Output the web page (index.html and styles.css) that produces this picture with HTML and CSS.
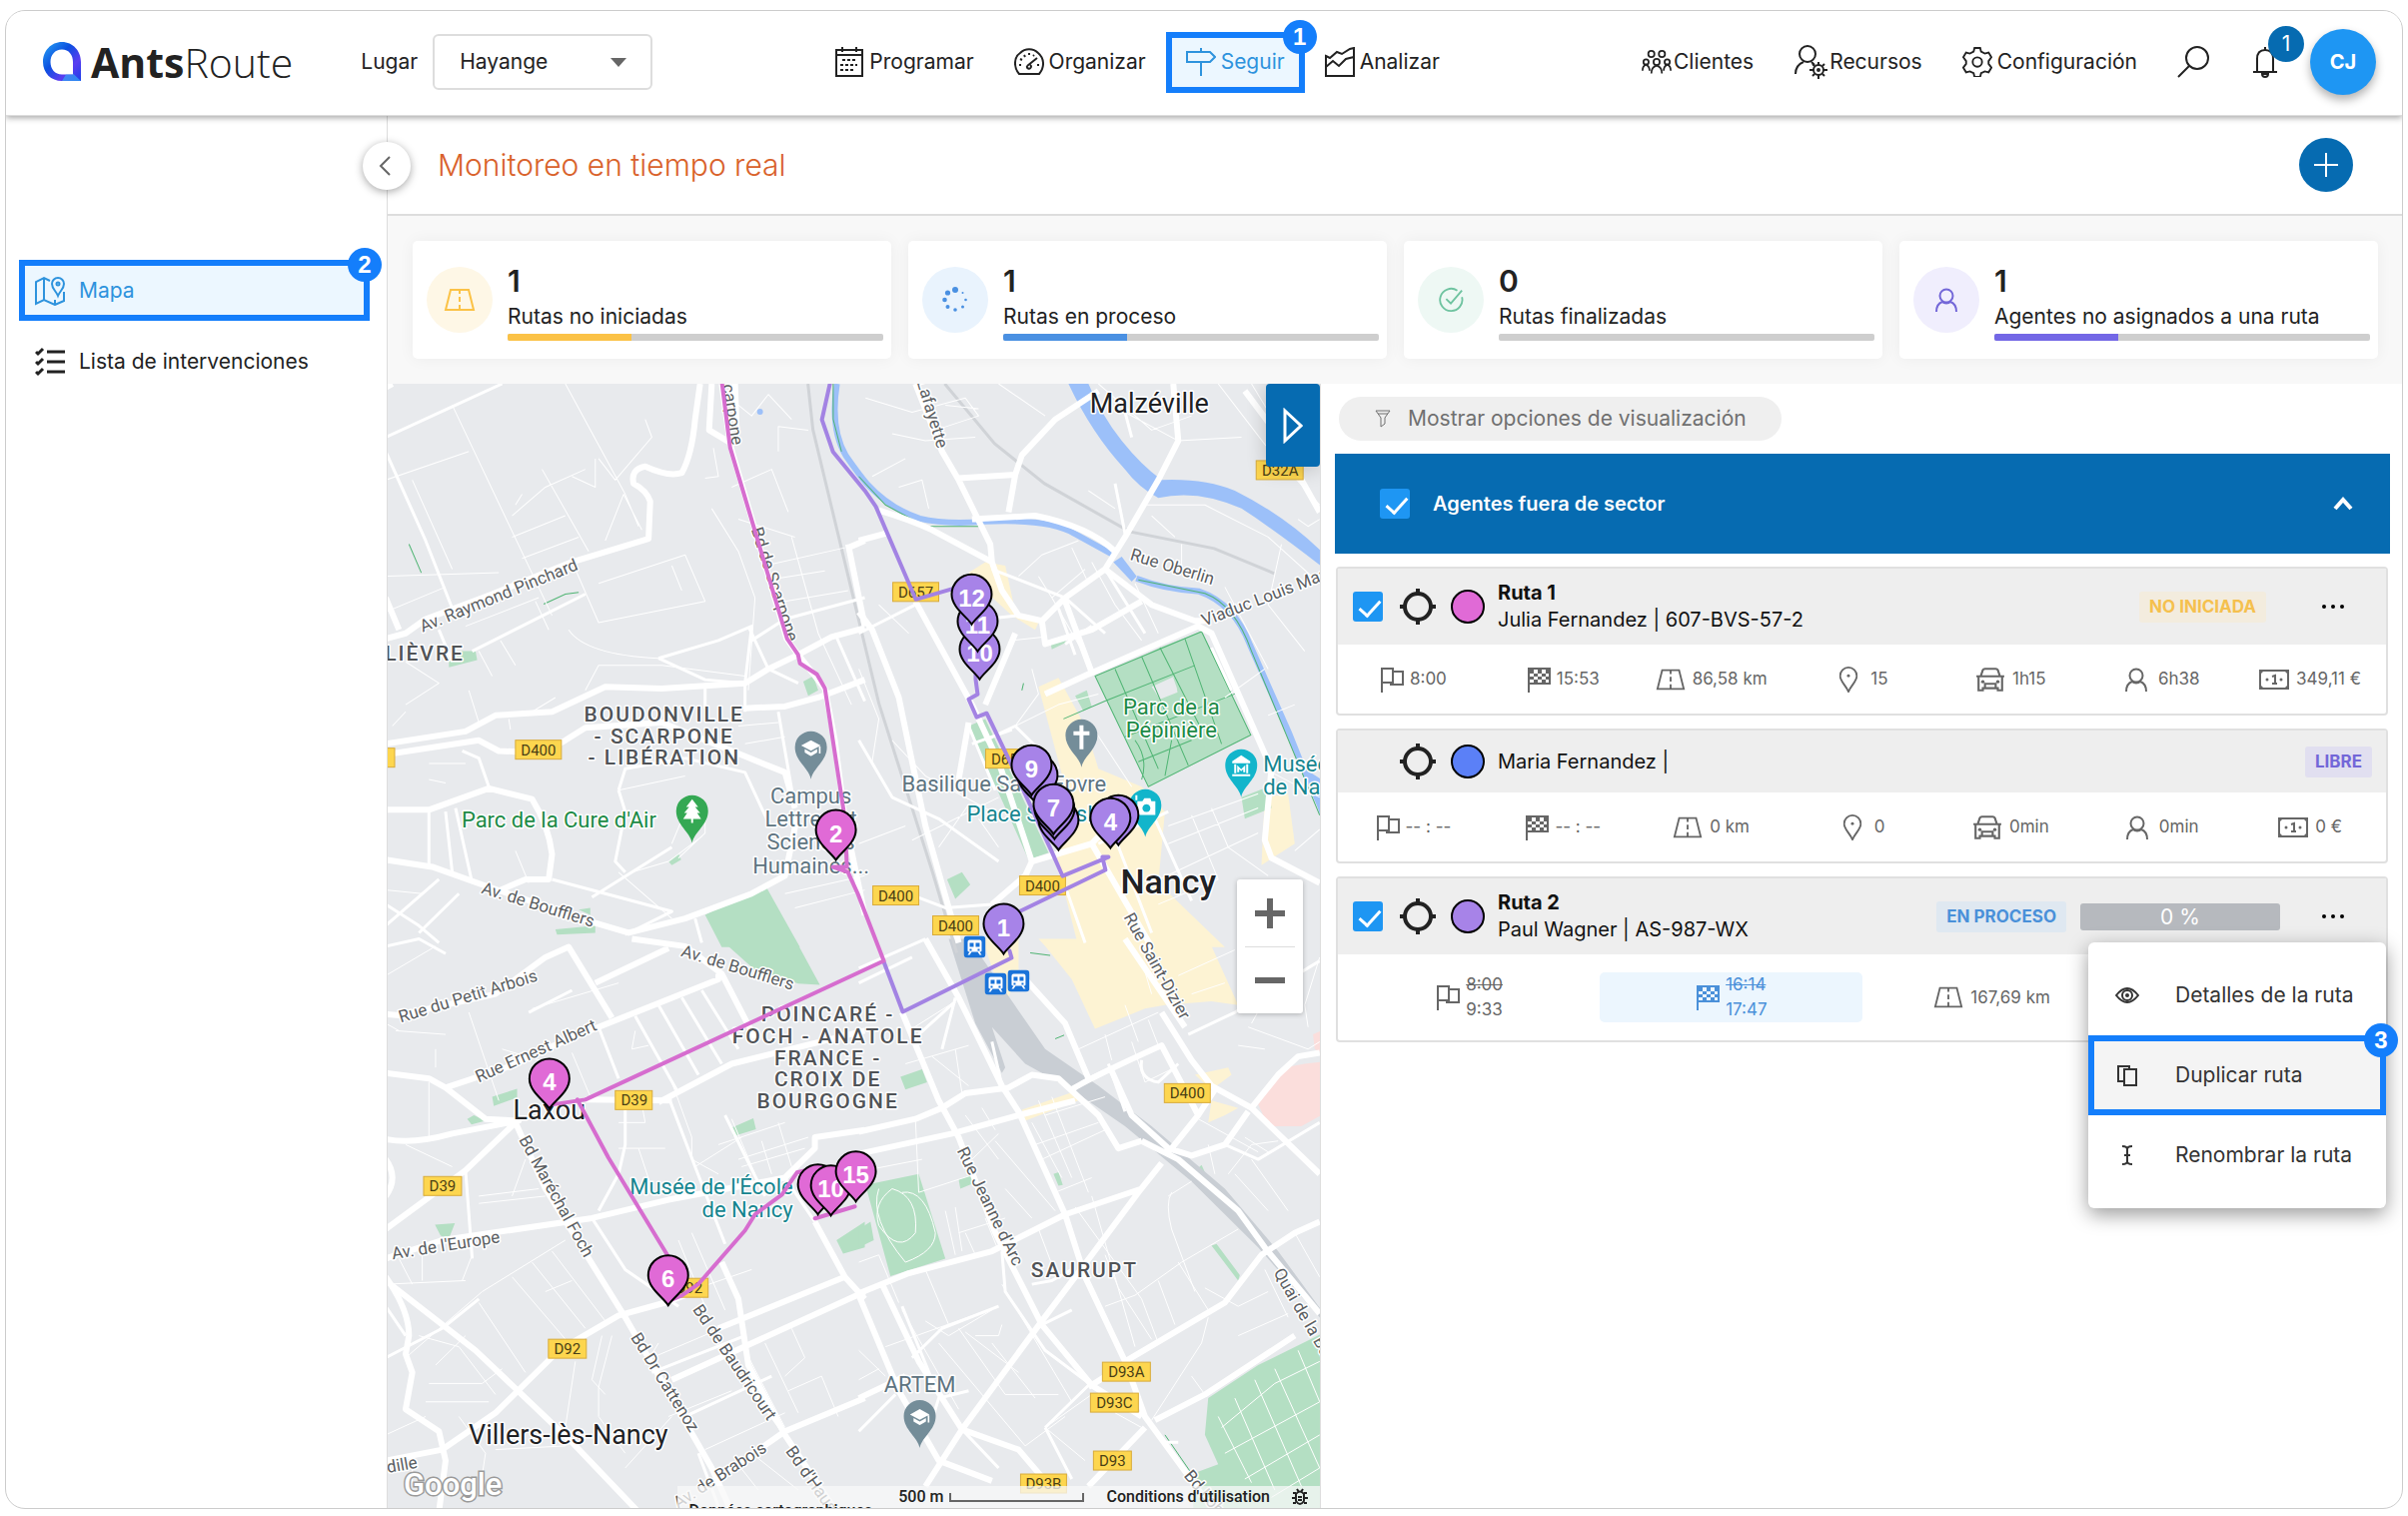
FILE: index.html
```html
<!DOCTYPE html>
<html lang="es">
<head>
    <meta charset="UTF-8">
    <meta name="viewport" content="width=device-width, initial-scale=1.0">
    <title>AntsRoute - Monitoreo en tiempo real</title>
    <link rel="stylesheet" href="styles.css">
</head>
<body>
    <!-- Iconos compartidos -->
    <svg class="sprite" aria-hidden="true">
        <symbol id="i-road" viewBox="0 0 32 24"><path d="M7 2h18l5 20H2z M16 2v4 M16 9v5 M16 17v5"/></symbol>
        <symbol id="i-user" viewBox="0 0 24 26"><circle cx="12" cy="9" r="6.5"/><path d="M2 25c0-6 3-9 6-10 2 2 6 2 8 0 3 1 6 4 6 10"/></symbol>
        <symbol id="i-flag" viewBox="0 0 24 26"><path d="M2 26V2h11v14H2 M13 5h10v13H11v-2"/></symbol>
        <symbol id="i-finish" viewBox="0 0 24 26"><path d="M2 26V2h21v15H2"/><path class="solid" d="M3 3h4v4H3z M11 3h4v4h-4z M19 3h3v4h-3z M7 7h4v3H7z M15 7h4v3h-4z M3 10h4v3H3z M11 10h4v3h-4z M19 10h3v3h-3z M7 13h4v4H7z M15 13h4v4h-4z"/></symbol>
        <symbol id="i-pin" viewBox="0 0 20 28"><path d="M10 27C7 20 1 16 1 10a9 9 0 0 1 18 0c0 6-6 10-9 17z"/><circle class="solid" cx="10" cy="10" r="1.6"/></symbol>
        <symbol id="i-car" viewBox="0 0 28 24"><path d="M5 9l2-6q.5-1 2-1h10q1.5 0 2 1l2 6 M1 9h26 M3 9v13h4v-2h14v2h4V9 M9 19v-3h10v3"/><circle class="solid" cx="7" cy="14" r="1.6"/><circle class="solid" cx="21" cy="14" r="1.6"/></symbol>
        <symbol id="i-money" viewBox="0 0 30 20"><path d="M1 1h28v18H1z M13 7l3-1v8 M13 14h5"/><path class="solid" d="M1 1h4L1 5z M29 1v4l-4-4z M1 19v-4l4 4z M29 19h-4l4-4z"/><circle class="solid" cx="8" cy="10" r="1.5"/><circle class="solid" cx="22" cy="10" r="1.5"/></symbol>
        <symbol id="i-target" viewBox="0 0 36 36"><circle cx="18" cy="18" r="13"/><path d="M18 0v6 M18 30v6 M0 18h6 M30 18h6"/></symbol>
        <symbol id="pin" viewBox="-22 -54 44 56" overflow="visible"><path d="M0 0C-5-8-20-17-20-30a20 20 0 0 1 40 0C20-17 5-8 0 0z"/></symbol>
        <symbol id="poi" viewBox="-18 -50 36 52" overflow="visible"><path d="M0 0C-2-11-16-18-16-32a16 16 0 0 1 32 0C16-18 2-11 0 0z"/></symbol>
        <symbol id="cap" viewBox="0 0 22 18"><path d="M11 0l11 6-11 6L0 6z M4 10l7 4 7-4v4l-7 4-7-4z M20 7h2v8h-2z"/></symbol>
        <symbol id="bus" viewBox="0 0 22 22"><rect width="22" height="22" rx="4" fill="#1a73d9"/><path fill="#fff" d="M6 4h10q2 0 2 2v9q0 1-2 1l2 3h-2l-2-3H8l-2 3H4l2-3q-2 0-2-1V6q0-2 2-2z"/><path fill="#1a73d9" d="M6 7h4v4H6z M12 7h4v4h-4z M6 13h2v2H6z M14 13h2v2h-2z"/></symbol>
    </svg>

    <div class="app">
        <header class="header">
            <a href="#" class="logo">
                <svg class="logo-mark" viewBox="0 0 40 40">
                    <defs><linearGradient id="lg" x1="0" y1="0" x2="1" y2="1"><stop offset="0" stop-color="#2ba8f5"/><stop offset=".4" stop-color="#0b50e0"/><stop offset=".7" stop-color="#5a3df0"/><stop offset="1" stop-color="#1a3fe8"/></linearGradient></defs>
                    <path fill="url(#lg)" fill-rule="evenodd" d="M20 0C31 0 39 9 39 20v19H20C9 39 1 31 1 20S9 0 20 0z M20 7.5C13 7.5 8.5 13 8.5 20S13 32.5 20 32.5h11V20c0-7-4-12.5-11-12.5z"/>
                    <path fill="#35b6f7" d="M20 39l4-6.5h7v-1l8 7.5z" opacity=".6"/>
                </svg>
                <span class="logo-text"><b>Ants</b>Route</span>
            </a>
            <div class="place">
                <label for="lugar">Lugar</label>
                <div class="select">
                    <select id="lugar"><option>Hayange</option></select>
                </div>
            </div>
            <nav class="nav">
                <a href="#" class="nav-item">
                    <svg class="icon" viewBox="0 0 30 30"><path d="M2 3h26v26H2z M2 8h26 M8 0v5 M22 0v5"/><path d="M8 13h15 M6 18h17 M6 23h13" stroke-dasharray="3 2"/></svg>Programar</a>
                <a href="#" class="nav-item">
                    <svg class="icon" viewBox="0 0 30 30"><path d="M5 27C-1 20 0 10 6 6c5-5 13-5 18 0 6 5 7 14 1 21z M13 19L23 11 M13 19a2 2 0 1 0 3-1"/><path d="M5 18h2 M6 12l2 1 M10 8l1 2 M15 6v2 M20 8l-1 1 M23 18h2"/></svg>Organizar</a>
                <a href="#" class="nav-item highlight">
                    <svg class="icon" viewBox="0 0 30 30"><path d="M1 5h23l5 5-5 5H1z M15 1v4 M15 15v14"/></svg>Seguir<span class="step">1</span></a>
                <a href="#" class="nav-item">
                    <svg class="icon" viewBox="0 0 30 30"><path d="M1 9l4 2 7-6 5 2 8-5 4-1v28H1z M1 20l7-6 6 5 7-7 8-2"/></svg>Analizar</a>
            </nav>
            <nav class="nav">
                <a href="#" class="nav-item nav-tight">
                    <svg class="icon" viewBox="0 0 34 30"><circle cx="11" cy="6" r="3.5"/><circle cx="23" cy="6" r="3.5"/><circle cx="5" cy="15" r="3"/><circle cx="29" cy="15" r="3"/><circle cx="17" cy="15" r="3.5"/><path d="M1 25c0-4 1-6 4-7 2 1 4 3 4 7 M25 25c0-4 2-6 4-7 3 1 4 3 4 7 M11 28c0-5 2-8 6-9 4 1 6 4 6 9"/></svg>Clientes</a>
                <a href="#" class="nav-item nav-tight">
                    <svg class="icon icon-lg" viewBox="0 0 34 34"><circle cx="14" cy="9" r="8"/><path d="M2 29c0-6 3-10 8-12 M18 17l3 3"/><circle cx="25" cy="25" r="5"/><circle cx="25" cy="25" r="1"/><path d="M25 17v3 M25 30v4 M16 25h4 M30 25h4 M19 19l2 2 M29 29l2 2 M31 19l-2 2 M21 29l-2 2"/></svg>Recursos</a>
                <a href="#" class="nav-item">
                    <svg class="icon" viewBox="0 0 30 32"><path d="M12 1h6l1 4 4 2 4-1 3 5-3 4v3l3 4-3 5-4-1-4 2-1 4h-6l-1-4-4-2-4 1-3-5 3-4v-3l-3-4 3-5 4 1 4-2z"/><circle cx="15" cy="16" r="5"/></svg>Configuración</a>
                <button type="button" class="icon-button" aria-label="Buscar">
                    <svg class="icon" viewBox="0 0 32 32"><circle cx="20" cy="12" r="11"/><path d="M12 20L1 31"/></svg>
                </button>
                <button type="button" class="icon-button bell" aria-label="Notificaciones">
                    <svg class="icon" viewBox="0 0 26 32"><path d="M5 26V13c0-6 3-9 8-9s8 3 8 9v13 M1 26h24 M13 1v3 M10 28a3 3 0 0 0 6 0z"/></svg>
                    <span class="count">1</span>
                </button>
                <button type="button" class="avatar">CJ</button>
            </nav>
        </header>

        <div class="body">
            <aside class="sidebar">
                <button type="button" class="collapse" aria-label="Contraer menú">
                    <svg class="icon" viewBox="0 0 24 24"><path d="M15 3l-9 9 9 9"/></svg>
                </button>
                <a href="#" class="side-item highlight">
                    <svg class="icon" viewBox="0 0 30 30"><path d="M15 5l-6-3-8 4v22l8-4 11 5 9-4V16 M9 2v22 M20 24v5"/><path d="M23 20c-2-5-6-7-6-12a6 6 0 0 1 12 0c0 5-4 7-6 12z"/><circle cx="23" cy="8" r="1.5"/></svg>
                    Mapa<span class="step">2</span></a>
                <a href="#" class="side-item">
                    <svg class="icon icon-bold" viewBox="0 0 30 30"><path d="M12 5h18 M12 15h18 M12 25h18 M1 5l2 2 5-5 M1 15l2 2 5-5 M1 25l2 2 5-5"/></svg>
                    Lista de intervenciones</a>
            </aside>

            <main class="main">
                <div class="titlebar">
                    <h1>Monitoreo en tiempo real</h1>
                    <button type="button" class="add" aria-label="Agregar">
                        <svg class="icon" viewBox="0 0 24 24"><path d="M12 0v24 M0 12h24"/></svg>
                    </button>
                </div>

                <!-- Resumen de rutas -->
                <section class="stats">
                    <div class="stat stat-yellow">
                        <div class="stat-icon"><svg class="icon" viewBox="0 0 32 24"><use href="#i-road"/></svg></div>
                        <div class="stat-data"><strong>1</strong><span>Rutas no iniciadas</span><div class="bar"><div class="bar-fill" style="width: 33%"></div></div></div>
                    </div>
                    <div class="stat stat-blue">
                        <div class="stat-icon"><svg class="icon icon-dots" viewBox="0 0 26 26"><circle cx="13" cy="3" r="3"/><circle cx="5.5" cy="6" r="2.6"/><circle cx="2.5" cy="13" r="2.3"/><circle cx="5.5" cy="20" r="2"/><circle cx="13" cy="23" r="1.8"/><circle cx="20.5" cy="20" r="1.5"/><circle cx="23.5" cy="13" r="1.3"/><circle cx="20.5" cy="6" r="1"/></svg></div>
                        <div class="stat-data"><strong>1</strong><span>Rutas en proceso</span><div class="bar"><div class="bar-fill" style="width: 33%"></div></div></div>
                    </div>
                    <div class="stat stat-green">
                        <div class="stat-icon"><svg class="icon" viewBox="0 0 28 28"><path d="M21 4a12 12 0 1 0 5 7 M9 13l5 5L26 4"/></svg></div>
                        <div class="stat-data"><strong>0</strong><span>Rutas finalizadas</span><div class="bar"><div class="bar-fill" style="width: 0%"></div></div></div>
                    </div>
                    <div class="stat stat-violet">
                        <div class="stat-icon"><svg class="icon" viewBox="0 0 24 26"><use href="#i-user"/></svg></div>
                        <div class="stat-data"><strong>1</strong><span>Agentes no asignados a una ruta</span><div class="bar"><div class="bar-fill" style="width: 33%"></div></div></div>
                    </div>
                </section>

                <div class="content">
                    <!-- Mapa -->
                    <section class="map">
                        <svg class="map-canvas" viewBox="2 0 934 1126" preserveAspectRatio="xMinYMin slice">
                            <g class="water">
                                <path transform="translate(474) scale(.3333 .3571)" d="M630 0H690Q730 90 790 160Q850 230 910 270Q1040 265 1130 300Q1280 370 1390 470V512Q1250 410 1150 350Q1020 295 900 320Q840 290 800 240Q700 140 630 0z M765 500L790 485L835 540L820 555z M1340 1080L1390 1110V1220z"/>
                                <path class="canal" d="M452 0Q445 45 461 72Q475 92 482 100Q505 125 535 135Q560 141 600 138Q665 135 690 150L730 172"/>
                                <path class="canal" d="M752 195Q780 206 815 208Q850 220 866 262L905 350L923 395L940 430"/>
                                <circle cx="375" cy="28" r="3"/>
                            </g>
                            <!-- Parques, zonas comerciales y hospital -->
                            <g class="shops">
                                <path transform="translate(474) scale(.3333 .3571)" d="M540 850L600 825L680 960L720 1080L850 1130L920 1200L900 1400L1100 1580H660L590 1320L640 1200z M330 530L380 500L440 510L470 640L540 670L530 690L460 650L390 590z M1220 1160L1290 1150L1310 1290L1210 1350z"/>
                                <path transform="translate(474 556) scale(.3333 .368)" d="M560 20L540 0H1050L1140 180L1060 170L920 180L860 190L710 245L640 110z M370 0H480V90L440 180z M490 465L650 415L660 440L500 495z M1060 440L1140 460L1100 480L1050 500z M1010 370L1110 350L1120 370L1060 410z"/>
                            </g>
                            <path class="hospital" transform="translate(474 556) scale(.3333 .368)" d="M1200 450L1280 350L1340 340L1390 335V480L1330 510H1230z M1365 260L1390 250V310L1370 300z"/>
                            <g class="park">
                                <path transform="scale(.3333 .3571)" d="M960 1490L1140 1405L1245 1580H1010z M190 770L215 750H270L275 775L190 795z M1255 835L1285 820L1300 860L1270 875z M850 1340L880 1318L888 1335L860 1350z M510 1530L630 1520V1540L515 1545z M580 1475L615 1470V1490z"/>
                                <path transform="translate(474) scale(.3333 .3571)" d="M710 820L850 765L905 740L950 820L880 850L905 885L960 865L945 825L1030 695L1178 985L870 1132z M905 740L1030 695L1120 860L960 880L950 820z M330 960L380 940L570 1315L510 1335z M650 875L685 860L700 905L675 918z M1150 1160L1230 1130L1240 1190L1160 1220z M575 720L620 712L622 726L580 745z M265 1390L310 1370L335 1405L290 1445z"/>
                                <path transform="translate(0 556) scale(.3333 .368)" d="M1005 0H1230L1305 125L1240 122L1110 85z M320 430L395 408V432L325 455z M245 490L265 480L300 495L258 505z M1038 515L1105 488L1113 518L1045 537z M148 778L208 774L190 815L165 808z M1355 820L1440 770V840L1375 857z"/>
                                <path transform="translate(474 556) scale(.3333 .368)" d="M20 670L180 640L260 870L95 918z M0 790L35 770L45 820L0 840z M1050 1250L1200 1160L1390 1075V1550H1005V1455L1080 1430L1040 1350z M125 375L190 355L205 390L140 410z M300 655L345 640V665L305 680z M585 640L600 635L613 670L600 672z M1000 640L1030 615L1045 645L1025 655z M1060 835L1075 830L1145 915L1140 930z"/>
                            </g>
                            <g class="park-path">
                                <path transform="translate(474) scale(.3333 .3571)" d="M710 820L870 1130L1178 985L1030 695z M770 800L900 1080 M850 765L990 1070 M905 740L1030 970 M980 715L1090 1010 M740 890L1010 790 M800 990L1130 870 M840 1060L1000 1000 M830 1000Q870 1050 850 1110 M940 1000L920 1100 M615 940L740 890 M1385 1210L1180 750Q1130 620 1040 588L840 550 M490 860L495 840 M0 260L80 340L200 400L360 400"/>
                                <path transform="scale(.3333 .3571)" d="M70 450L107 530 M475 618L540 590L580 585 M1345 0L1345 100L1370 190"/>
                                <path transform="translate(474 556) scale(.3333 .368)" d="M515 38L575 45 M590 272L617 262 M920 1350L1000 1455"/>
                            </g>
                            <g class="rail">
                                <path class="yard" transform="translate(474 556) scale(.3333 .368)" d="M270 0H330L430 130L560 300L720 400L880 510L1100 680L1260 850L1390 1010V1035L1200 840L1000 660L800 510L640 410L500 340L400 240L440 350L430 365L350 230z"/>
                                <path d="M423 0L428 46L453 150L494 320L548 490L572 570"/>
                                <path d="M560 0L610 60L660 100L745 148L830 165L890 190"/>
                            </g>
                            <g class="street thin">
                                <path transform="scale(.3333 .3571)" d="M200 60L500 650 M540 0L720 310L760 400 M0 270L250 190 M80 270L200 520 M380 370L480 290L600 240 M380 430L540 370 M410 490L580 430 M470 240L610 470 M660 440L715 310L770 410 M640 210L690 270L800 150L780 100 M240 680L460 600 M280 750L320 820 M345 720L390 790 M0 540L340 530 M570 520L640 670L960 610L900 480 M640 560L900 480 M860 510L890 580 M550 690Q600 760 820 770 M600 860L640 790L830 790L1080 820 M250 860L280 950 M370 940L375 970 M440 920L510 880 M130 1065H240 M130 1110L180 1120 M700 1140L900 1100 M560 260L630 290V210 M980 350L1060 470L1110 600L1090 860 M985 180L1000 260L960 265 M1040 290L1160 240L1210 360 M1060 380L1230 430 M1140 510L1380 460 M1150 550L1320 525 M1200 610L1390 580 M1220 430L1300 700L1400 900 M1060 60L1100 90L1150 30L1220 100 M1180 190V120L1270 130 M0 640L180 570 M1200 1430L1440 1380 M1230 1470L1440 1420 M1060 960L1180 950 M1080 1010L1200 990 M700 1370L860 1500 M740 1370L850 1340L950 1270 M0 1420L110 1430 M60 900L160 840L60 780 M450 610L490 690 M410 310L390 340 M20 960L60 920 M390 1310L430 1400 M860 1290L900 1200L960 1210V1260L880 1330"/>
                                <path transform="translate(474) scale(.3333 .3571)" d="M20 40L160 80L320 40L360 90L230 130 M100 140L200 160L350 150 M260 60L360 70 M40 260L140 210 M120 290L190 270L210 350 M420 0L560 90 M720 0L880 130L1000 90 M1080 0L1220 170L1385 340 M800 80L960 160L1150 150 M690 300L770 350 M880 370L950 430 M860 340H1040L1230 430L1385 560 M970 450V520 M640 460L690 560 M540 540L580 600L680 520 M480 540L550 480L660 440 M700 500L770 620L850 720 M830 560L900 700 M60 620L150 700 M0 800L60 940L40 1060 M100 1000L200 1100L400 1200 M160 1280L420 1160 M420 1300L360 1220 M240 1300L330 1180 M0 1290L140 1240 M580 600L690 780 M460 720L560 710 M470 960L600 900L720 870 M520 800L540 870L470 960 M1100 570L1230 800 M1100 880L1220 800 M930 1240L1200 1150 M930 1290L1200 1190 M1000 1210L1080 1390 M1060 1190L1110 1300L1230 1380 M880 1400L1200 1260 M900 1460L1080 1390 M1240 1090L1385 1160 M1310 1310L1385 1250 M1230 930L1310 900 M700 960L820 1130 M1270 450L1230 620L1340 750 M1180 0L1310 200 M1320 380L1350 400L1385 380"/>
                                <path transform="translate(0 556) scale(.3333 .368)" d="M0 100L150 20 M440 190L700 120 M350 300L460 330 M250 200L340 440 M130 390V540 M560 310L620 440 M420 600L380 700 M280 700L460 680 M280 720L480 700 M60 560L200 620 M700 500H780L770 450 M700 570L840 570 M930 620L1070 540 M860 390L920 540V600L1000 640 M1000 560L1200 500 M1060 600L1270 540 M1070 620L1260 570 M1040 490L1110 640 M1130 550L1160 640 M1180 500L1220 620 M880 820L960 1000 M920 800L1020 1010 M940 950L1100 900 M800 1140L1060 1040 M780 1160L820 1100 M850 1300L1040 1230 M960 1390L1200 1290 M1220 1060L1260 1140L1200 1190 M1210 1230L1310 1190L1360 1300 M1050 1420L1120 1500 M1100 1400L1240 1500 M380 920L550 1100 M440 880L600 1060 M500 850L660 1040 M280 990L420 1180 M100 1080L220 1110L330 1240 M60 1140L290 960L540 820 M130 1210H290L350 1170 M120 1260L310 1260 M150 1160L240 1080 M40 870L80 940 M110 860V930 M0 940L240 930 M260 860L230 930 M570 1150L540 1330 M650 1080L620 1200L660 1240 M680 1080L640 1220V1300L720 1400 M480 960L560 930 M220 1300L300 1400L290 1460 M330 1390L540 1380 M80 1400V1480 M720 1440L860 1300 M1080 1120L1200 1330 M1140 1100L1240 1290 M0 1350L120 1300 M800 680L760 570 M750 250L740 300L790 290 M150 300V350 M30 250L180 260 M0 230L40 250"/>
                                <path transform="translate(474 556) scale(.3333 .368)" d="M150 250L290 170 M140 340L330 290 M290 300L310 420 M220 320L330 400 M320 480L420 600 M370 460L410 520 M170 490L180 690L350 640 M20 630L190 600 M410 550L590 740 M520 500L610 650 M440 680L520 760 M420 530L340 600 M530 560L720 500 M550 600L740 520 M540 440L640 650 M580 430L690 690 M590 690L700 650 M560 480L740 430 M700 700L830 1110 M650 730L850 980L900 1100 M740 860L780 950L880 1090 M830 970L970 880L1140 790 M740 1000L830 970 M900 930L950 1050 M960 880L1050 1010 M1050 1030L1030 1100L880 1310 M1110 640L1180 560L1260 550 M1020 490L1200 580 M1130 640L1230 740 M1180 600L1290 740 M1160 540L1230 580 M660 300L900 200 M740 260L760 330 M820 280L860 390L950 350 M800 180L840 280 M870 220L900 290 M850 60L880 150 M960 100L1130 30 M1000 150L1100 120 M1170 240L1350 300L1385 280 M1140 290L1220 300 M1180 230L1260 100 M1350 240L1340 180L1385 50 M130 1010L300 1280 M0 1120L80 1190 M80 1110L420 1000 M200 1040L270 1080L400 1010 M350 1080H420L430 1050 M0 1200L60 1170 M240 1100L500 1380 M300 1060L440 1240L600 1240 M400 1100L530 1250 M430 940L640 1260 M320 1070L480 1180 M560 1330L700 1240 M560 1330L680 1420 M500 1380L620 1300 M1000 1190L1040 1240 M1040 950L1140 1000L1230 960 M1140 1080L1290 1020 M1220 900L1290 1030 M1310 800L1385 920 M0 880L60 860L120 990 M200 900L270 1050 M260 740L290 860 M290 730L310 850 M320 800L350 860 M300 800L440 760 M380 760L420 850 M540 790L590 910 M940 690Q920 720 940 790L1010 960 M930 700L1000 660 M770 1290L850 1330 M1070 640L1050 560"/>
                            </g>
                            <g class="street medium">
                                <path transform="scale(.3333 .3571)" d="M0 190L120 440L200 630 M0 150L210 60L350 0 M820 770L960 830L1080 840 M820 770L1000 720L1100 680L1080 840V920 M960 840V910 M600 590L260 750 M160 690L200 780 M1090 680L1150 800 M1100 720L1200 660L1440 600 M1350 700L1440 890 M1180 920L1230 1190 M1150 800L1240 840 M130 1200V1360 M180 1200L200 1370 M210 1190L260 1400 M310 1130L280 1050L230 1030 M700 1140L720 1200L690 1340L720 1370 M700 1140L720 1080L900 1050 M900 1050L1080 1090L1150 1230 M620 1440L860 1300 M500 1390L860 1480L720 1545 M930 1500L950 1568 M0 1520L160 1390 M100 1540L220 1430 M0 1460L100 1520L160 1568"/>
                                <path transform="translate(474) scale(.3333 .3571)" d="M400 520L620 600L740 700 M560 870L700 810 M620 730L700 680 M0 700L170 620 M770 280L800 420 M650 760L600 630 M740 520L860 700 M820 150L800 80 M380 660L480 650 M0 1000L100 1160L240 1220L420 1340 M380 1000L470 960L600 1080 M330 960L410 1140 M340 1010L460 970 M1120 860L1060 740 M720 1290L860 1230L930 1200 M590 1330L680 1568 M760 1250L880 1540 M880 1200L1000 1450 M120 1420L260 1470L400 1460"/>
                                <path transform="translate(0 556) scale(.3333 .368)" d="M0 20L100 0L180 40 M750 210L880 420 M820 180L940 370 M890 160L1010 340 M950 140L1060 300 M640 240L700 380 M430 200L560 140 M720 440V560L700 640L640 740 M240 630L260 870 M620 760L720 900L880 1000 M1020 480L1140 700 M850 430L930 620L1020 830 M900 1300L1160 1190 M800 1180L1080 1080 M940 1400L1000 1545 M1200 1350L1080 1200 M1290 770L1200 650 M0 1140L170 1060L280 980 M0 1000L60 1080"/>
                                <path transform="translate(474 556) scale(.3333 .368)" d="M0 80L200 0 M250 300L290 160 M0 120L160 50 M180 260L290 170 M400 280L430 400 M690 380L760 350 M750 340L800 470 M1100 560L1200 600L1385 500 M850 330Q840 380 900 390L960 340 M990 260L1130 200L1385 60 M430 850L440 960L560 1120L700 1215 M550 1050L640 1010 M130 1000L220 1200 M160 1140L250 1060L420 1000 M0 1340L110 1240 M520 940L580 930L640 900 M860 1300L920 1370L960 1370 M310 1335L420 1440 M690 1215L560 1330 M560 1330L640 1470 M210 1340L240 1250L330 1230"/>
                            </g>
                            <g class="street wide">
                                <path transform="scale(.3333 .3571)" d="M0 715L60 700L120 660L320 590L560 500L790 435L795 330Q785 300 745 280Q735 240 780 232Q850 262 890 250Q920 200 930 100L945 0 M980 0L972 130L1035 165 M1010 0L1035 170L1205 715L1240 760 M1050 0L1055 130 M0 10L20 0 M0 600L40 690 M0 1040L280 1000L340 1030L470 1035L540 1000L600 965L830 950L1080 1045L1200 1090L1230 1190 M0 1010L240 975L330 930L500 920L660 850L830 855L1080 840L1150 800L1240 760L1340 710L1440 685 M0 1195L130 1195L310 1135L440 1165Q490 1240 500 1320L490 1390L420 1390L320 1430 M0 1335L140 1355L290 1405L620 1510L730 1540L900 1500L1100 1430L1200 1380L1240 1200 M1080 910L1200 905L1300 880L1440 830 M1240 760L1320 855L1350 1000L1380 1220L1440 1490 M1390 450L1440 680 M1390 460L1440 440"/>
                                <path transform="translate(474) scale(.3333 .3571)" d="M170 0L250 190L300 270L395 450L400 500L430 580L480 650L550 665L620 600L740 520L800 430L900 270L960 160L945 0 M300 265L470 255L450 360 M470 255L490 200L590 100L720 20 M0 440L80 420 M60 355Q150 380 220 410L400 500 M340 380L530 370Q690 400 770 470 M740 520L880 620L1010 665H1050 M690 815L1020 680L1060 700L1240 1080L1220 1280L1240 1330L1385 1400 M550 665L560 730L700 690L850 610 M620 610L700 810L560 870 M0 640L40 690L120 880L200 1240L300 1568 M170 610L340 900L420 1060L520 1340 M470 700L380 900 M400 1460L500 1380L520 1340L700 1290L720 1270 M700 1290L880 1580 M1160 20L1240 120L1385 360 M300 1110L330 950"/>
                                <path transform="translate(0 556) scale(.3333 .368)" d="M0 365L130 380L180 405L380 345L480 300L640 240L1000 110L1000 95 M0 205L40 208L330 150L480 50L550 22L680 215 M630 120L850 25 M740 0L900 20L1010 95L1110 270 M0 545Q80 560 200 530L400 495L300 490L180 405 M0 790L240 630L390 500L480 680L720 1030L980 1440L1040 1560 M0 870L170 820L620 760L850 710L1200 650L1290 570V540L1440 520 M0 930L270 1120L560 1370L760 1560 M0 1420L170 1390L330 1290L520 1120L700 1025L840 990L900 970 M0 920Q70 1010 70 1080L60 1130L80 1180L60 1280L160 1340L180 1420L160 1560 M1010 880L1060 980L1090 1160L1200 1350L1340 1540 M860 1200L1440 960 M1000 1060L1380 920 M1290 770L1380 920L1440 980 M820 445L1040 340L1440 250 M950 1500L1200 1340L1440 1250 M600 437L860 440 M0 600Q40 650 0 700"/>
                                <path transform="translate(474 556) scale(.3333 .368)" d="M200 0L300 160L430 400L480 470L620 750L680 920L800 1150L860 1300L1070 1560 M480 90L620 230L690 380 M0 525L170 490L250 460L320 420L450 405L520 370L600 380L720 480L780 570L850 550 M0 585L280 530L480 480L650 440 M640 410Q690 380 910 290L1020 480 M910 200L1000 330L1060 400L1180 460L1385 640 M1180 460L1260 370L1320 320L1385 310 M760 360L820 480L930 570L1000 590L1100 560L1170 470 M940 570L1020 480L1070 410 M850 550L960 600L1140 740L1220 840L1385 1020 M910 610L840 690L700 860L550 1040L310 1335L200 1490 M0 965L150 910L400 850L620 750L850 680 M70 940L180 1150L310 1335L480 1390L560 1475 M0 970L120 1230L240 1420L400 1475 M130 200L240 440L300 540L410 800L550 1050L700 1215L850 1300 M0 1250L140 1190 M800 1150L1100 990L1210 860L1310 800L1385 770 M860 1330L690 1490 M890 1310L1040 1240L1310 1080 M690 1220L760 1180 M800 0L980 240"/>
                                <path transform="translate(474 556) scale(.3333 .368)" class="lane" d="M1090 1330L1250 1210L1385 1150 M1080 1300L1180 1480 M1130 1250L1250 1500 M1190 1200L1330 1490 M1250 1170L1385 1440 M1320 1120L1385 1260 M1100 1400L1385 1260 M1160 1470L1385 1350 M1240 1520L1385 1440 M100 680Q180 700 170 800Q120 860 60 780Q40 720 100 680 M60 680Q30 760 140 880Q230 850 230 800Q200 680 130 690"/>
                            </g>

                            <g class="label">
                                <text class="road-name" transform="translate(347 62) rotate(81)" text-anchor="end">Bd de Scarpone</text>
                                <text class="road-name" transform="translate(366 146) rotate(72)">Bd de Scarpone</text>
                                <text class="road-name" transform="translate(532 -2) rotate(73)">Lafayette</text>
                                <text class="road-name" transform="translate(37 249) rotate(-22)">Av. Raymond Pinchard</text>
                                <text class="road-name" transform="translate(745 176) rotate(17)">Rue Oberlin</text>
                                <text class="road-name" transform="translate(820 243) rotate(-21)">Viaduc Louis Marin</text>
                                <text class="road-name" transform="translate(95 510) rotate(17)">Av. de Boufflers</text>
                                <text class="road-name" transform="translate(295 573) rotate(17)">Av. de Boufflers</text>
                                <text class="road-name" transform="translate(15 640) rotate(-17)">Rue du Petit Arbois</text>
                                <text class="road-name" transform="translate(93 700) rotate(-24)">Rue Ernest Albert</text>
                                <text class="road-name" transform="translate(133 757) rotate(61)">Bd Maréchal Foch</text>
                                <text class="road-name" transform="translate(7 877) rotate(-9)">Av. de l'Europe</text>
                                <text class="road-name" transform="translate(245 955) rotate(58)">Bd Dr Cattenoz</text>
                                <text class="road-name" transform="translate(307 927) rotate(56)">Bd de Baudricourt</text>
                                <text class="road-name" transform="translate(293 1127) rotate(-33)">Av. de Brabois</text>
                                <text class="road-name" transform="translate(400 1069) rotate(55)">Bd d'Haussonville</text>
                                <text class="road-name" transform="translate(2 1091) rotate(-10)">dille</text>
                                <text class="road-name" transform="translate(572 768) rotate(64)">Rue Jeanne d'Arc</text>
                                <text class="road-name" transform="translate(739 534) rotate(61)">Rue Saint-Dizier</text>
                                <text class="road-name" transform="translate(889 890) rotate(60)">Quai de la Bataille</text>
                                <text class="road-name" transform="translate(799 1094) rotate(50)">Bd Lobau</text>
                                <text class="district" x="79" y="277" text-anchor="end">LIÈVRE</text>
                                <text class="district" text-anchor="middle"><tspan x="279" y="338">BOUDONVILLE</tspan><tspan x="279" y="360">- SCARPONE</tspan><tspan x="279" y="381">- LIBÉRATION</tspan></text>
                                <text class="district" text-anchor="middle"><tspan x="443" y="639">POINCARÉ -</tspan><tspan x="443" y="661">FOCH - ANATOLE</tspan><tspan x="443" y="683">FRANCE -</tspan><tspan x="443" y="704">CROIX DE</tspan><tspan x="443" y="726">BOURGOGNE</tspan></text>
                                <text class="district" x="700" y="895" text-anchor="middle">SAURUPT</text>
                                <text class="town" x="765" y="29" text-anchor="middle">Malzéville</text>
                                <text class="city" x="784" y="510" text-anchor="middle">Nancy</text>
                                <text class="town" x="164" y="737" text-anchor="middle">Laxou</text>
                                <text class="town" x="183" y="1062" text-anchor="middle">Villers-lès-Nancy</text>
                                <text class="place-green" x="76" y="444">Parc de la Cure d'Air</text>
                                <text class="place-green" text-anchor="middle"><tspan x="787" y="331">Parc de la</tspan><tspan x="787" y="354">Pépinière</tspan></text>
                                <text class="place-gray" text-anchor="middle"><tspan x="426" y="420">Campus</tspan><tspan x="426" y="443">Lettres et</tspan><tspan x="426" y="466">Sciences</tspan><tspan x="426" y="490">Humaines...</tspan></text>
                                <text class="place-gray" x="517" y="408">Basilique Saint-Epvre</text>
                                <text class="place-gray" x="535" y="1010" text-anchor="middle">ARTEM</text>
                                <text class="place-teal" x="582" y="438">Place Stanislas</text>
                                <text class="place-teal"><tspan x="879" y="388">Musée</tspan><tspan x="879" y="411">de Nancy</tspan></text>
                                <text class="place-teal" text-anchor="end"><tspan x="408" y="812">Musée de l'École</tspan><tspan x="408" y="835">de Nancy</tspan></text>
                            </g>

                            <g class="shield">
                                <rect x="130" y="357" width="46" height="19"/><text x="153" y="372">D400</text>
                                <rect x="-30" y="365" width="39" height="19"/>
                                <rect x="508" y="199" width="46" height="19"/><text x="531" y="214">D657</text>
                                <rect x="601" y="366" width="46" height="19"/><text x="624" y="381">D657</text>
                                <rect x="635" y="493" width="46" height="19"/><text x="658" y="508">D400</text>
                                <rect x="488" y="503" width="46" height="19"/><text x="511" y="518">D400</text>
                                <rect x="548" y="533" width="46" height="19"/><text x="571" y="548">D400</text>
                                <rect x="872" y="77" width="47" height="19"/><text x="896" y="92">D32A</text>
                                <rect x="230" y="708" width="37" height="19"/><text x="249" y="723">D39</text>
                                <rect x="38" y="794" width="38" height="19"/><text x="57" y="809">D39</text>
                                <rect x="286" y="896" width="37" height="19"/><text x="304" y="911">D92</text>
                                <rect x="163" y="957" width="38" height="19"/><text x="182" y="972">D92</text>
                                <rect x="780" y="701" width="46" height="19"/><text x="803" y="716">D400</text>
                                <rect x="718" y="980" width="48" height="19"/><text x="742" y="995">D93A</text>
                                <rect x="706" y="1011" width="48" height="19"/><text x="730" y="1026">D93C</text>
                                <rect x="709" y="1069" width="38" height="19"/><text x="728" y="1084">D93</text>
                                <rect x="636" y="1092" width="46" height="19"/><text x="659" y="1107">D93B</text>
                            </g>

                            <g class="poi">
                                <use href="#poi" x="408" y="346" width="36" height="52" fill="#748d99"/><use href="#cap" x="416" y="357" width="20" height="16" fill="#fff"/>
                                <use href="#poi" x="289" y="410" width="36" height="52" fill="#34a853"/><path fill="#fff" d="M307 416l6 8h-3l5 6h-3l4 6h-8v4h-2v-4h-8l4-6h-3l5-6h-3z"/>
                                <use href="#poi" x="679" y="334" width="36" height="52" fill="#748d99"/><path fill="#fff" d="M695 342h4v6h6v4h-6v14h-4v-14h-6v-4h6z"/>
                                <use href="#poi" x="839" y="364" width="36" height="52" fill="#12b5cb"/><path fill="#fff" d="M857 372l9 6v2h-18v-2z M850 381h2v9h-2z M862 381h2v9h-2z M848 391h18v2h-18z M853 389v-7l4 4 4-4v7h-2v-3l-2 2-2-2v3z"/>
                                <use href="#poi" x="743" y="404" width="36" height="52" fill="#12b5cb"/><path fill="#fff" fill-rule="evenodd" d="M753 418h5l2-3h6l1 3h4v14h-18z M762 421a4 4 0 1 0 .1 0z M751 412h2v5h-2z"/>
                                <use href="#poi" x="517" y="1016" width="36" height="52" fill="#748d99"/><use href="#cap" x="525" y="1027" width="20" height="16" fill="#fff"/>
                                <use href="#bus" x="579" y="553" width="22" height="22"/><use href="#bus" x="600" y="590" width="22" height="22"/><use href="#bus" x="623" y="587" width="22" height="22"/>
                            </g>

                            <!-- Trazado de las rutas -->
                            <path class="route violet" d="M445 0L437 36L448 68L480 107L491 123L531 216L569 205 M591 286V296L593 311L584 316L592 334L602 330L629 386L667 468L678 493L724 474H718L721 487L634 529L620 535 M625 568L627 575L518 629L499 579"/>
                            <path class="route pink" d="M337 0L345 64L402 255L413 271L415 280L432 291L440 305L448 357L460 436L462 484H448L463 489L473 511L499 578L200 717L166 722 M192 717L223 775L283 874 M285 918L297 913L313 902L360 848L370 832L397 812L412 790L425 787 M430 836L470 824"/>

                            <g class="pins violet">
                                <g transform="translate(595 296)"><use href="#pin" x="-22" y="-54" width="44" height="56"/><text y="-18">10</text></g>
                                <g transform="translate(593 268)"><use href="#pin" x="-22" y="-54" width="44" height="56"/><text y="-18">11</text></g>
                                <g transform="translate(587 241)"><use href="#pin" x="-22" y="-54" width="44" height="56"/><text y="-18">12</text></g>
                                <use href="#pin" x="631" y="368" width="44" height="56"/>
                                <g transform="translate(647 412)"><use href="#pin" x="-22" y="-54" width="44" height="56"/><text y="-18">9</text></g>
                                <use href="#pin" x="652" y="413" width="44" height="56"/>
                                <use href="#pin" x="648" y="402" width="44" height="56"/>
                                <g transform="translate(669 451)"><use href="#pin" x="-22" y="-54" width="44" height="56"/><text y="-18">7</text></g>
                                <use href="#pin" x="712" y="408" width="44" height="56"/>
                                <g transform="translate(726 465)"><use href="#pin" x="-22" y="-54" width="44" height="56"/><text y="-18">4</text></g>
                                <g transform="translate(619 571)"><use href="#pin" x="-22" y="-54" width="44" height="56"/><text y="-18">1</text></g>
                            </g>
                            <g class="pins pink">
                                <g transform="translate(451 477)"><use href="#pin" x="-22" y="-54" width="44" height="56"/><text y="-18">2</text></g>
                                <g transform="translate(164 726)"><use href="#pin" x="-22" y="-54" width="44" height="56"/><text y="-18">4</text></g>
                                <g transform="translate(283 923)"><use href="#pin" x="-22" y="-54" width="44" height="56"/><text y="-18">6</text></g>
                                <use href="#pin" x="411" y="778" width="44" height="56"/>
                                <g transform="translate(446 833)"><use href="#pin" x="-22" y="-54" width="44" height="56"/><text y="-18">10</text></g>
                                <g transform="translate(471 819)"><use href="#pin" x="-22" y="-54" width="44" height="56"/><text y="-18">15</text></g>
                            </g>
                            <text class="google" x="18" y="1113">Google</text>
                        </svg>
                        <button type="button" class="map-toggle" aria-label="Ampliar mapa">
                            <svg class="icon" viewBox="0 0 20 36"><path d="M2 3l16 15L2 33z"/></svg>
                        </button>
                        <div class="zoom">
                            <button type="button" aria-label="Acercar"><svg viewBox="0 0 30 30"><path d="M15 0v30 M0 15h30"/></svg></button>
                            <button type="button" aria-label="Alejar"><svg viewBox="0 0 30 30"><path d="M0 15h30"/></svg></button>
                        </div>
                        <div class="map-footer">
                            <span class="map-data">Données cartographiques</span>
                            <span>500 m</span>
                            <span class="scale"></span>
                            <a href="#">Conditions d'utilisation</a>
                            <svg class="icon" viewBox="0 0 16 18"><path d="M4 6q4-5 8 0v7q-4 6-8 0z M1 5h3 M12 5h3 M0 10h4 M12 10h4 M1 15h3 M12 15h3 M6 9h4 M6 12h4 M5 1l2 3 M11 1L9 4"/></svg>
                        </div>
                    </section>

                    <!-- Lista de rutas -->
                    <section class="panel">
                        <button type="button" class="filter">
                            <svg class="icon" viewBox="0 0 16 18"><path d="M1 1h14l-5 7v6l-4 3V8z M3 4h10"/></svg>
                            Mostrar opciones de visualización
                        </button>
                        <div class="group">
                            <input type="checkbox" class="check" id="sector" checked>
                            <label for="sector">Agentes fuera de sector</label>
                            <svg class="icon chevron" viewBox="0 0 20 14"><path d="M2 12l8-9 8 9"/></svg>
                        </div>

                        <article class="route-card">
                            <div class="route-head">
                                <input type="checkbox" class="check" aria-label="Ruta 1" checked>
                                <svg class="target" viewBox="0 0 36 36"><use href="#i-target"/></svg>
                                <span class="dot dot-pink"></span>
                                <div class="route-name"><b>Ruta 1</b><span>Julia Fernandez | 607-BVS-57-2</span></div>
                                <span class="badge badge-yellow">NO INICIADA</span>
                                <button type="button" class="more" aria-label="Opciones de Ruta 1"><i></i><i></i><i></i></button>
                            </div>
                            <div class="route-info">
                                <div><svg class="icon" viewBox="0 0 24 26"><use href="#i-flag"/></svg>8:00</div>
                                <div><svg class="icon" viewBox="0 0 24 26"><use href="#i-finish"/></svg>15:53</div>
                                <div class="spaced"><svg class="icon" viewBox="0 0 32 24"><use href="#i-road"/></svg>86,58 km</div>
                                <div class="spaced"><svg class="icon" viewBox="0 0 20 28"><use href="#i-pin"/></svg>15</div>
                                <div class="spaced"><svg class="icon" viewBox="0 0 28 24"><use href="#i-car"/></svg>1h15</div>
                                <div class="spaced"><svg class="icon" viewBox="0 0 24 26"><use href="#i-user"/></svg>6h38</div>
                                <div class="spaced"><svg class="icon" viewBox="0 0 30 20"><use href="#i-money"/></svg>349,11 €</div>
                            </div>
                        </article>

                        <article class="route-card">
                            <div class="route-head">
                                <span class="check-space"></span>
                                <svg class="target" viewBox="0 0 36 36"><use href="#i-target"/></svg>
                                <span class="dot dot-blue"></span>
                                <div class="route-name"><span>Maria Fernandez |</span></div>
                                <span class="badge badge-violet">LIBRE</span>
                            </div>
                            <div class="route-info">
                                <div><svg class="icon" viewBox="0 0 24 26"><use href="#i-flag"/></svg>-- : --</div>
                                <div><svg class="icon" viewBox="0 0 24 26"><use href="#i-finish"/></svg>-- : --</div>
                                <div class="spaced"><svg class="icon" viewBox="0 0 32 24"><use href="#i-road"/></svg>0 km</div>
                                <div class="spaced"><svg class="icon" viewBox="0 0 20 28"><use href="#i-pin"/></svg>0</div>
                                <div class="spaced"><svg class="icon" viewBox="0 0 28 24"><use href="#i-car"/></svg>0min</div>
                                <div class="spaced"><svg class="icon" viewBox="0 0 24 26"><use href="#i-user"/></svg>0min</div>
                                <div class="spaced"><svg class="icon" viewBox="0 0 30 20"><use href="#i-money"/></svg>0 €</div>
                            </div>
                        </article>

                        <article class="route-card">
                            <div class="route-head">
                                <input type="checkbox" class="check" aria-label="Ruta 2" checked>
                                <svg class="target" viewBox="0 0 36 36"><use href="#i-target"/></svg>
                                <span class="dot dot-violet"></span>
                                <div class="route-name"><b>Ruta 2</b><span>Paul Wagner | AS-987-WX</span></div>
                                <span class="badge badge-blue">EN PROCESO</span>
                                <div class="progress">0 %</div>
                                <button type="button" class="more" aria-label="Opciones de Ruta 2"><i></i><i></i><i></i></button>
                            </div>
                            <div class="route-info route-info-4">
                                <div><svg class="icon" viewBox="0 0 24 26"><use href="#i-flag"/></svg><span class="times"><s>8:00</s>9:33</span></div>
                                <div class="late"><svg class="icon" viewBox="0 0 24 26"><use href="#i-finish"/></svg><span class="times"><s>16:14</s>17:47</span></div>
                                <div class="spaced"><svg class="icon" viewBox="0 0 32 24"><use href="#i-road"/></svg>167,69 km</div>
                            </div>
                            <div class="menu">
                                <button type="button"><svg class="icon" viewBox="0 0 24 20"><path d="M1 10Q12-4 23 10Q12 24 1 10z"/><circle cx="12" cy="10" r="5"/><circle class="solid" cx="12" cy="10" r="2"/></svg>Detalles de la ruta</button>
                                <button type="button" class="highlight"><svg class="icon" viewBox="0 0 24 24"><path d="M8 18H3V3h11v3 M9 6h12v16H9z"/></svg>Duplicar ruta<span class="step">3</span></button>
                                <button type="button"><svg class="icon" viewBox="0 0 24 24"><path d="M7 3q5 0 5 3q0-3 5-3 M12 5v14 M7 21q5 0 5-3q0 3 5 3 M9 12h6"/></svg>Renombrar la ruta</button>
                            </div>
                        </article>
                    </section>
                </div>
            </main>
        </div>
    </div>
</body>
</html>
```
FILE: styles.css
```css
/* Base */
* {
    box-sizing: border-box;
}

body {
    font-family: Inter, "Open Sans", sans-serif;
    font-size: 21px;
    line-height: 24px;
    color: #222;
    margin: 0;
    padding: 10px 5px 7px;
    background: #fff;
}

button, select, input {
    font: inherit;
    color: inherit;
    margin: 0;
}

button {
    background: none;
    border: none;
    padding: 0;
    cursor: pointer;
}

a {
    color: inherit;
    text-decoration: none;
}

.sprite {
    position: absolute;
    width: 0;
    height: 0;
}

.icon {
    width: 30px;
    height: 30px;
    flex: none;
    fill: none;
    stroke: currentColor;
    stroke-width: 2;
}

.icon-lg {
    width: 34px;
    height: 34px;
}

.icon-bold {
    stroke-width: 3;
}

.solid {
    fill: currentColor;
    stroke: none;
}

.app {
    display: flex;
    flex-direction: column;
    min-height: calc(100vh - 17px);
    border: 1px solid #ccc;
    border-radius: 20px;
    overflow: hidden;
}

/* Encabezado */
.header {
    display: flex;
    align-items: center;
    height: 105px;
    padding: 0 26px 2px 36px;
    background: #fff;
    border-bottom: 1px solid #ddd;
    box-shadow: 0 2px 6px rgba(0, 0, 0, 0.35);
    position: relative;
    z-index: 2;
}

.logo {
    display: flex;
    align-items: center;
    gap: 9px;
}

.logo-mark {
    width: 40px;
    height: 40px;
}

.logo-text {
    font-family: "Open Sans", sans-serif;
    font-size: 41px;
    font-weight: 300;
    line-height: 48px;
}

.logo-text b {
    font-weight: 700;
}

.place {
    display: flex;
    align-items: center;
    gap: 15px;
    margin-left: 68px;
}

.select {
    position: relative;
}

.select::after {
    content: "";
    position: absolute;
    right: 26px;
    top: 24px;
    border: 8px solid transparent;
    border-top: 9px solid #666;
    border-bottom: 0;
    pointer-events: none;
}

select {
    appearance: none;
    width: 220px;
    height: 56px;
    padding: 0 25px;
    border: 2px solid #ddd;
    border-radius: 6px;
    background: #fff;
}

.nav {
    display: flex;
    align-items: center;
}

.nav:first-of-type {
    margin: 0 auto;
}

.nav-item {
    display: flex;
    align-items: center;
    gap: 5px;
    height: 61px;
    padding: 0 20px;
}

.nav-tight {
    gap: 2px;
}

.highlight {
    position: relative;
    color: #2e93dd;
    background: #ecf7ff;
    border: 6px solid #147efb;
}

.nav-item.highlight {
    padding: 0 14px;
}

.step {
    position: absolute;
    top: -18px;
    right: -18px;
    width: 34px;
    height: 34px;
    border-radius: 50%;
    background: #147efb;
    color: #fff;
    font-family: "Liberation Sans", sans-serif;
    font-size: 24px;
    font-weight: 700;
    line-height: 34px;
    text-align: center;
}

.icon-button {
    display: flex;
    padding: 0 20px;
}

.icon-button .icon {
    width: 32px;
    height: 32px;
}

.bell {
    position: relative;
    padding: 0 31px 0 22px;
}

.bell .icon {
    width: 28px;
}

.count {
    position: absolute;
    top: -20px;
    right: 6px;
    width: 36px;
    height: 36px;
    border-radius: 50%;
    background: #066bb1;
    color: #fff;
    line-height: 36px;
}

.avatar {
    width: 66px;
    height: 66px;
    border-radius: 50%;
    background: #1e96f3;
    color: #fff;
    font-size: 20px;
    font-weight: 700;
    box-shadow: 0 5px 10px rgba(0, 0, 0, 0.3);
}

/* Menú lateral */
.body {
    display: flex;
    flex: 1;
}

.sidebar {
    position: relative;
    display: flex;
    flex-direction: column;
    gap: 10px;
    width: 382px;
    padding: 144px 17px 0 13px;
    border-right: 1px solid #ddd;
}

.collapse {
    position: absolute;
    z-index: 1;
    top: 26px;
    right: -24px;
    display: flex;
    align-items: center;
    justify-content: center;
    width: 48px;
    height: 48px;
    border-radius: 50%;
    background: #fff;
    color: #666;
    box-shadow: 0 2px 8px rgba(0, 0, 0, 0.35);
}

.collapse .icon {
    width: 24px;
    height: 24px;
}

.side-item {
    display: flex;
    align-items: center;
    gap: 14px;
    height: 61px;
    padding: 0 16px;
}

.side-item.highlight {
    padding: 0 10px;
}

/* Contenido principal */
.main {
    display: flex;
    flex-direction: column;
    flex: 1;
    min-width: 0;
}

.titlebar {
    display: flex;
    align-items: center;
    justify-content: space-between;
    height: 100px;
    padding: 0 49px 0 50px;
    border-bottom: 2px solid #ddd;
}

h1 {
    margin: 0;
    font-size: 30px;
    font-weight: 300;
    line-height: 36px;
    color: #d9622b;
}

.add {
    display: flex;
    align-items: center;
    justify-content: center;
    width: 54px;
    height: 54px;
    border-radius: 50%;
    background: #066bb1;
    color: #fff;
}

.add .icon {
    width: 24px;
    height: 24px;
}

.stats {
    display: grid;
    grid-template-columns: repeat(4, 1fr);
    gap: 17px;
    padding: 25px 24px 25px 25px;
    background: #f8f8f8;
}

.stat {
    display: flex;
    align-items: center;
    gap: 15px;
    height: 118px;
    padding: 0 8px 0 14px;
    border-radius: 5px;
    background: #fff;
    box-shadow: 0 0 16px rgba(0, 0, 40, 0.05);
}

.stat-icon {
    display: flex;
    align-items: center;
    justify-content: center;
    flex: none;
    width: 66px;
    height: 66px;
    border-radius: 50%;
}

.stat-icon .icon {
    width: 32px;
    height: 26px;
}

.stat-icon .icon-dots {
    fill: currentColor;
    stroke: none;
}

.stat-data {
    flex: 1;
    display: flex;
    flex-direction: column;
    padding-top: 3px;
}

.stat-data strong {
    font-size: 30px;
    font-weight: 600;
    line-height: 36px;
    margin-bottom: 6px;
}

.bar {
    height: 7px;
    margin-top: 5px;
    border-radius: 2px;
    background: #cecece;
    overflow: hidden;
}

.bar-fill {
    height: 100%;
}

.stat-yellow .stat-icon { background: #fef7e6; color: #fbc246; }
.stat-yellow .bar-fill { background: #fbc246; }
.stat-blue .stat-icon { background: #e9f3fd; color: #4a90e2; }
.stat-blue .bar-fill { background: #4a90e2; }
.stat-green .stat-icon { background: #eef8f4; color: #6fc3a0; }
.stat-violet .stat-icon { background: #f0eefd; color: #7367d8; }
.stat-violet .bar-fill { background: #7367e6; }

.content {
    display: grid;
    grid-template-columns: minmax(0, 934fr) minmax(0, 1082fr);
    flex: 1;
}

/* Mapa */
.map {
    position: relative;
    background: #e8eaed;
    border-right: 1px solid #ddd;
    overflow: hidden;
}

.map-canvas {
    position: absolute;
    width: 100%;
    height: 100%;
    font-family: Roboto, sans-serif;
}

.map-canvas path {
    vector-effect: non-scaling-stroke;
}

.water { fill: #9cc0f9; }
.canal { fill: none; stroke: #9cc0f9; stroke-width: 6; }
.shops { fill: #fdf3d3; }
.hospital { fill: #fbdedc; }
.park { fill: #b4dfc3; }
.park-path { fill: none; stroke: #4fb473; stroke-width: 1; }
.rail { fill: none; stroke: #d0d3d7; stroke-width: 3; }
.yard { fill: #c9ced4; stroke: none; }
.street { fill: none; stroke: #fff; stroke-linejoin: round; }
.thin { stroke-width: 1; }
.medium { stroke-width: 3; }
.wide { stroke-width: 6; }
.lane { stroke-width: 1; }

.label text {
    paint-order: stroke;
    stroke: #fff;
    stroke-width: 3px;
    stroke-linejoin: round;
}

.label .road-name { font-size: 17px; fill: #5a5d61; }
.label .district { font-size: 21px; font-weight: 500; letter-spacing: 2px; fill: #505357; }
.label .town { font-size: 27px; fill: #202124; }
.label .city { font-size: 34px; font-weight: 500; fill: #202124; }
.label .place-green { font-size: 22px; fill: #1b8a45; }
.label .place-gray { font-size: 22px; fill: #5d7380; }
.label .place-teal { font-size: 22px; fill: #15858f; }

.shield rect { fill: #fdd64f; stroke: #d8ab3a; stroke-width: 1; }
.shield text { font-size: 15px; fill: #4a3f14; text-anchor: middle; }

.route { fill: none; stroke-width: 4; stroke-linejoin: round; stroke-linecap: round; }
.route.violet { stroke: #a383e3; }
.route.pink { stroke: #d66dcf; }

.pins { stroke: #000; stroke-width: 2; }
.pins.violet { fill: #a783e8; }
.pins.pink { fill: #e06ad6; }

.pins text {
    font-family: "Liberation Sans", sans-serif;
    font-size: 24px;
    font-weight: 700;
    fill: #fff;
    stroke: none;
    text-anchor: middle;
}

.google {
    font-size: 31px;
    font-weight: 500;
    fill: #fff;
    stroke: #9a9a9a;
    stroke-width: 3px;
    paint-order: stroke;
}

.map-toggle {
    position: absolute;
    top: 0;
    right: 0;
    display: flex;
    align-items: center;
    justify-content: center;
    width: 54px;
    height: 83px;
    border-radius: 4px;
    background: #066bb1;
    color: #fff;
    box-shadow: 0 2px 20px rgba(0, 0, 0, 0.2);
}

.map-toggle .icon {
    width: 20px;
    height: 36px;
    stroke-width: 3;
}

.zoom {
    position: absolute;
    right: 17px;
    bottom: 495px;
    width: 66px;
    padding: 0 8px;
    border-radius: 3px;
    background: #fff;
    box-shadow: 0 1px 5px rgba(0, 0, 0, 0.25);
}

.zoom button {
    display: flex;
    align-items: center;
    justify-content: center;
    width: 50px;
    height: 67px;
}

.zoom button + button {
    border-top: 1px solid #ddd;
}

.zoom svg {
    width: 30px;
    height: 30px;
    stroke: #666;
    stroke-width: 6;
}

.map-footer {
    position: absolute;
    right: 0;
    bottom: 0;
    display: flex;
    align-items: center;
    gap: 6px;
    height: 22px;
    padding: 0 12px;
    background: rgba(248, 248, 248, 0.75);
    font-family: Roboto, sans-serif;
    font-size: 16px;
    font-weight: 500;
    line-height: 22px;
    overflow: hidden;
}

.map-footer .icon {
    width: 16px;
    height: 18px;
    margin-left: 16px;
}

/* El aviso de datos pasa a la segunda línea y queda recortado */
.map-data {
    align-self: flex-start;
    margin-right: 20px;
    padding-top: 14px;
}

.scale {
    width: 135px;
    height: 9px;
    margin-right: 16px;
    border: 2px solid #666;
    border-top: 0;
}

/* Panel de rutas */
.panel {
    padding: 13px 14px 0 15px;
}

.filter {
    display: flex;
    align-items: center;
    gap: 16px;
    height: 44px;
    margin-left: 3px;
    padding: 0 35px;
    border-radius: 22px;
    background: #efefef;
    color: #707070;
}

.filter .icon {
    width: 18px;
    height: 18px;
    stroke-width: 1;
}

.group {
    display: flex;
    align-items: center;
    gap: 23px;
    height: 100px;
    margin: 13px -2px 13px -1px;
    padding: 0 37px 0 45px;
    background: #066bb1;
    color: #fff;
    font-size: 20px;
    font-weight: 600;
}

.chevron {
    width: 20px;
    height: 14px;
    margin-left: auto;
    stroke-width: 4;
}

.check {
    appearance: none;
    position: relative;
    flex: none;
    width: 30px;
    height: 30px;
    border-radius: 3px;
    background: #1e96f3;
}

.check::after {
    content: "";
    position: absolute;
    left: 11px;
    top: 4px;
    width: 9px;
    height: 18px;
    border: solid #fff;
    border-width: 0 3px 3px 0;
    transform: rotate(42deg);
}

.check-space {
    width: 30px;
}

.route-card {
    position: relative;
    margin-bottom: 13px;
    border: 2px solid #e0e0e0;
    border-radius: 4px;
}

.route-head {
    display: flex;
    align-items: center;
    min-height: 62px;
    padding: 11px 14px 11px 15px;
    background: #eee;
}

.target {
    width: 36px;
    height: 36px;
    margin: 0 15px 0 17px;
    fill: none;
    stroke: #222;
    stroke-width: 4;
}

.dot {
    width: 34px;
    height: 34px;
    margin-right: 13px;
    border: 2px solid #000;
    border-radius: 50%;
}

.dot-pink { background: #e06ad6; }
.dot-blue { background: #5b80f7; }
.dot-violet { background: #a783e8; }

.route-name {
    display: flex;
    flex-direction: column;
    flex: 1;
    font-size: 20px;
    line-height: 27px;
    color: #111;
}

.route-name b {
    font-weight: 700;
}

.badge {
    height: 31px;
    padding: 0 10px;
    border-radius: 3px;
    font-size: 17px;
    font-weight: 700;
    line-height: 31px;
}

.badge-yellow { background: #f3ecde; color: #f5c04e; }
.badge-violet { background: #e1dff0; color: #7367d8; }
.badge-blue { background: #dfe8f1; color: #4a90d9; }

.progress {
    width: 200px;
    height: 27px;
    margin-left: 14px;
    border-radius: 3px;
    background: #b6b9be;
    color: #fff;
    line-height: 27px;
    text-align: center;
}

.more {
    display: flex;
    gap: 5px;
    padding: 12px 28px 12px 42px;
}

.more i {
    width: 4px;
    height: 4px;
    border-radius: 50%;
    background: #000;
}

.badge-yellow + .more {
    padding-left: 56px;
}

.route-info {
    display: grid;
    grid-template-columns: repeat(7, 1fr);
    align-items: center;
    height: 69px;
    font-size: 17px;
    line-height: 25px;
    color: #666;
}

.route-info > div {
    display: flex;
    align-items: center;
    justify-content: center;
    gap: 5px;
}

.route-info > .spaced {
    gap: 9px;
}

.route-info .icon {
    width: 30px;
    height: 26px;
    margin: 0 -2px;
}

.route-info-4 {
    grid-template-columns: repeat(4, 1fr);
    height: 86px;
}

.times {
    display: flex;
    flex-direction: column;
}

.route-info > .late {
    height: 50px;
    border-radius: 5px;
    background: #ecf6fe;
    color: #4a90d9;
}

/* Menú de la ruta */
.menu {
    position: absolute;
    z-index: 1;
    top: 64px;
    right: 0;
    width: 298px;
    padding: 13px 0;
    border-radius: 6px;
    background: #fff;
    box-shadow: 0 6px 20px rgba(0, 0, 0, 0.4);
}

.menu button {
    display: flex;
    align-items: center;
    gap: 36px;
    width: 100%;
    height: 80px;
    padding-left: 27px;
    color: #333;
}

.menu .highlight {
    padding-left: 21px;
    background: #f4f4f4;
}

.menu .icon {
    width: 24px;
    height: 24px;
}
```
